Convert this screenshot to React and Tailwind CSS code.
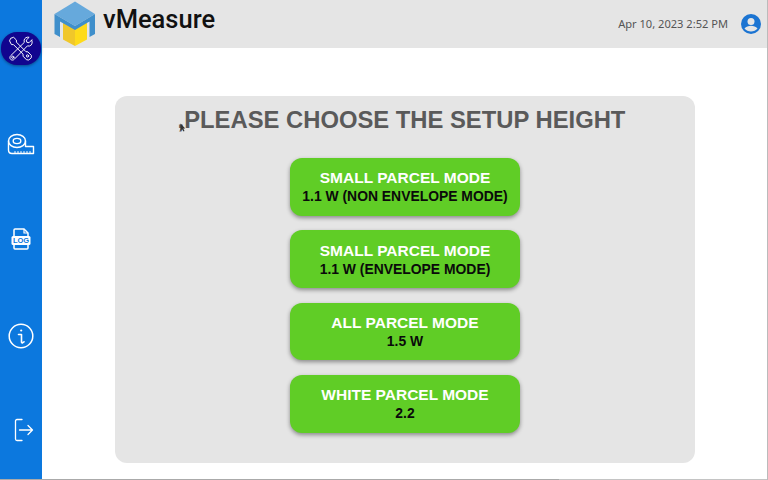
import React from "react";

const Tools = () => (
  <svg width="26" height="26" viewBox="0 0 30 30" fill="none" stroke="#fff" strokeWidth="1.1" strokeLinejoin="round" strokeLinecap="round">
    <path d="M3.500 2.500l3-1 3.200 3.200v2.400l11 11 2.300.2 4 4.200-.2 2.700-2.800 2.500-2.700-.3-3.900-4.100-.1-2.400-11-11H4L2 6z" />
    <path d="M27.500 4.500l-3.300 3.300-2.500-.6-.6-2.500L24.400 1.500c-2.600-.8-5.400.9-5.800 3.300l.2 2.600L3.300 22.500c-1.600 1.700-1.300 3.500-.2 4.500s3 1.100 4.300-.3l15-15.300 2.300.2c2.700-.5 4-3.800 2.800-6.600z" />
    <circle cx="22.500" cy="23" r="1.300" />
    <circle cx="5.500" cy="24.500" r="1.300" />
  </svg>
);

const Tape = () => (
  <svg width="28" height="24" viewBox="0 0 28 24" fill="none" stroke="#fff" strokeWidth="1.4" strokeLinecap="round" strokeLinejoin="round">
    <ellipse cx="10" cy="8" rx="8.500" ry="6.500" />
    <ellipse cx="10" cy="8" rx="3.800" ry="2.600" />
    <path d="M1.500 8v9c0 2 1.500 3.500 3.500 3.500h21.500v-7H18.500V8" />
    <path d="M8 20.500v-2M11 20.500v-2M14 20.500v-2M17 20.500v-2M20 20.500v-2M23 20.500v-2" strokeWidth="1" />
  </svg>
);

const LogIcon = () => (
  <svg width="20" height="22" viewBox="0 0 20 22" fill="none">
    <path d="M3 8V2a1 1 0 0 1 1-1h9l4 4v3" stroke="#fff" strokeWidth="1.500" />
    <path d="M13 1v4h4" stroke="#fff" strokeWidth="1.200" />
    <path d="M3 17v3a1 1 0 0 0 1 1h12a1 1 0 0 0 1-1v-3" stroke="#fff" strokeWidth="1.500" />
    <rect x="0.500" y="8" width="19" height="9" rx="1.500" fill="#fff" />
    <text x="10" y="15.300" textAnchor="middle" fontFamily="'Liberation Sans', sans-serif" fontSize="7.500" fontWeight="700" fill="#0c78de">LOG</text>
  </svg>
);

const Info = () => (
  <svg width="26" height="26" viewBox="0 0 26 26" fill="none" stroke="#fff" strokeLinecap="round" strokeLinejoin="round">
    <circle cx="13" cy="13" r="11.800" strokeWidth="1.500" />
    <circle cx="13.200" cy="7.500" r="1.100" fill="#fff" stroke="none" />
    <path d="M10.500 11.500h3v7.500c0 .8.700 1 1.200.7l1.300-.9" strokeWidth="1.600" />
  </svg>
);

const Logout = () => (
  <svg width="20" height="24" viewBox="0 0 20 24" fill="none" stroke="#fff" strokeWidth="1.300" strokeLinecap="round" strokeLinejoin="round">
    <path d="M8 1.500H3A1.500 1.500 0 0 0 1.500 3v18A1.500 1.500 0 0 0 3 22.500h5" />
    <path d="M5.500 12h13M14 7.500l4.500 4.500-4.500 4.500" />
  </svg>
);

const Logo = () => (
  <svg width="42" height="46" viewBox="0 0 42 46">
    <path d="M9 21L21 28V45L9 38.500Z" fill="#f0c72a" />
    <path d="M33 21L21 28V45L33 38.500Z" fill="#fedb1a" />
    <path d="M21 0.500L41 13L21 25L0.500 13Z" fill="#66a9dc" />
    <path d="M0.500 13L21 25L41 13V33L35.500 36V20.500L21 29L6 20.500V36L0.500 33Z" fill="#3f8fcb" />
  </svg>
);

const User = () => (
  <svg width="20" height="20" viewBox="0 0 20 20">
    <circle cx="10" cy="10" r="10" fill="#1b74d2" />
    <circle cx="10" cy="7.500" r="3.500" fill="#e5e5e5" />
    <path d="M3.500 14.500c1.500-2 4-2.800 6.500-2.800s5 .8 6.500 2.800C15 16.500 12.500 17.500 10 17.500s-5-1-6.500-3z" fill="#e5e5e5" />
  </svg>
);

const modes = [
  ["SMALL PARCEL MODE", "1.1 W (NON ENVELOPE MODE)"],
  ["SMALL PARCEL MODE", "1.1 W (ENVELOPE MODE)"],
  ["ALL PARCEL MODE", "1.5 W"],
  ["WHITE PARCEL MODE", "2.2"],
];

export default function App() {
  return (
    <div className="relative flex h-[480px] w-[768px] overflow-hidden bg-white font-['Liberation_Sans',sans-serif]">
      <aside className="flex h-full w-[42px] shrink-0 flex-col items-center bg-[#0c78de]">
        <div className="mt-[32px] flex h-[33px] w-[40px] items-center justify-center rounded-[16px] bg-[#11058f] shadow-[0_1px_3px_rgba(0,0,0,0.4)]">
          <Tools />
        </div>
        <div className="mt-[68px] flex h-[24px] items-center justify-center"><Tape /></div>
        <div className="mt-[70px] flex h-[24px] items-center justify-center"><LogIcon /></div>
        <div className="mt-[72px] flex h-[26px] items-center justify-center"><Info /></div>
        <div className="ml-[5px] mt-[69px] flex h-[24px] items-center justify-center"><Logout /></div>
      </aside>
      <div className="flex min-w-0 flex-1 flex-col">
        <header className="flex h-[48px] shrink-0 items-center bg-[#e5e5e5] pl-[12px] pr-[7px]">
          <Logo />
          <span className="mb-[8px] ml-[7px] font-['Roboto',sans-serif] text-[25.500px] font-medium leading-none text-[#111]">vMeasure</span>
          <span className="ml-auto font-['Noto_Sans',sans-serif] text-[11.100px] text-[#555]">Apr 10, 2023 2:52 PM</span>
          <div className="ml-[13px]"><User /></div>
        </header>
        <main className="flex flex-1 justify-center pt-[48px]">
          <section className="flex h-[367px] w-[580px] flex-col items-center rounded-[12px] bg-[#e5e5e5]">
            <h1 className="mr-[7px] mt-[10px] text-[23.800px] font-bold leading-[28px] text-[#5a5a5a]">,PLEASE CHOOSE THE SETUP HEIGHT</h1>
            <div className="mt-[24px] flex flex-col gap-[14.900px]">
              {modes.map(([a, b], i) => (
                <button key={i} className="flex h-[57.500px] w-[230.500px] flex-col items-center justify-center rounded-[12px] bg-[#60cd26] shadow-[0_2px_4px_rgba(0,0,0,0.4)]">
                  <span className="text-[15.500px] font-bold leading-[19px] text-white">{a}</span>
                  <span className="text-[13.900px] font-bold leading-[18px] text-[#0a0a0a]">{b}</span>
                </button>
              ))}
            </div>
          </section>
        </main>
      </div>
      <svg className="absolute left-[180px] top-[123px]" width="6" height="9" viewBox="0 0 6 9"><path d="M0.500 0.500V7.500L2 6L3.500 8.500L4.500 8L3.300 5.500H5.300Z" fill="#333" /></svg>
      <div className="absolute bottom-0 left-0 h-px w-full bg-[#c4c4c4]" />
      <div className="absolute bottom-0 left-0 h-px w-[559px] bg-[#aaa]" />
      <div className="absolute right-0 top-0 h-full w-px bg-[#bbb]" />
    </div>
  );
}
